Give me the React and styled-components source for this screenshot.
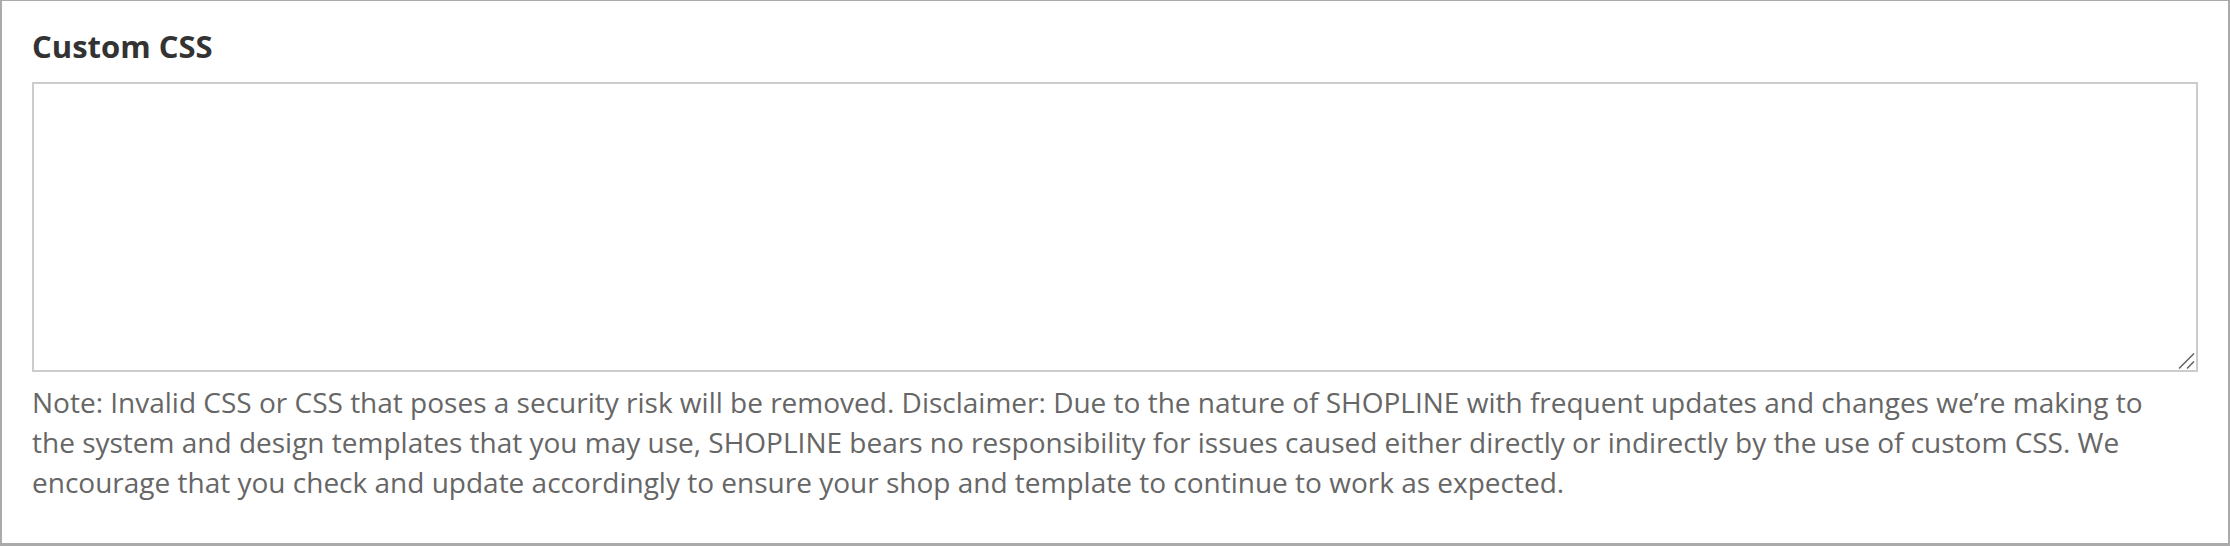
import React from 'react'
import styled, { createGlobalStyle } from 'styled-components'

// ---------------------------------------------------------------------------------------------------------------------
// Global
// ---------------------------------------------------------------------------------------------------------------------
const GlobalStyle = createGlobalStyle`
  html, body {
    margin: 0;
    padding: 0;
    background: #fff;
  }
  * {
    box-sizing: border-box;
  }
`

// ---------------------------------------------------------------------------------------------------------------------
// Styled Components
// ---------------------------------------------------------------------------------------------------------------------
const StyledPanel = styled.section`
  width: 2230px;
  height: 546px;
  display: flex;
  flex-direction: column;
  padding: 25px 30px 0 30px;
  border-style: solid;
  border-color: #aaa;
  border-width: 1px 2px 3px 2px;
  background: #fff;
  font-family: "Open Sans", "Liberation Sans", sans-serif;
`

const StyledLabel = styled.label`
  display: block;
  margin: 0 0 16px;
  font-size: 31px;
  line-height: 40px;
  font-weight: 700;
  color: #333;
`

const StyledField = styled.div`
  position: relative;
  height: 290px;
`

const StyledTextarea = styled.textarea`
  display: block;
  width: 100%;
  height: 100%;
  margin: 0;
  padding: 12px;
  border: 2px solid #ccc;
  border-radius: 0;
  resize: none;
  outline: none;
  font-family: "Liberation Mono", monospace;
  font-size: 26px;
  color: #333;
  background: #fff;
`

const StyledGrip = styled.svg`
  position: absolute;
  right: 2px;
  bottom: 2px;
  width: 18px;
  height: 18px;
  pointer-events: none;
`

const StyledHint = styled.p`
  margin: 10px 40px 0 0;
  font-size: 28px;
  line-height: 40px;
  font-weight: 400;
  color: #666;
`

// ---------------------------------------------------------------------------------------------------------------------
// Component
// ---------------------------------------------------------------------------------------------------------------------
const App = () => {
  return (
    <>
      <GlobalStyle />
      <StyledPanel>
        <StyledLabel htmlFor='custom-css'>Custom CSS</StyledLabel>
        <StyledField>
          <StyledTextarea id='custom-css' spellCheck={false} />
          <StyledGrip viewBox='0 0 18 18'>
            <path d='M1 16.5 L16 1.5' stroke='#666' strokeWidth='1.6' />
            <path d='M9 16.5 L16 9.5' stroke='#666' strokeWidth='1.6' />
          </StyledGrip>
        </StyledField>
        <StyledHint>
          Note: Invalid CSS or CSS that poses a security risk will be removed. Disclaimer: Due to the nature of SHOPLINE
          with frequent updates and changes we’re making to the system and design templates that you may use, SHOPLINE
          bears no responsibility for issues caused either directly or indirectly by the use of custom CSS. We encourage
          that you check and update accordingly to ensure your shop and template to continue to work as expected.
        </StyledHint>
      </StyledPanel>
    </>
  )
}

export default App
